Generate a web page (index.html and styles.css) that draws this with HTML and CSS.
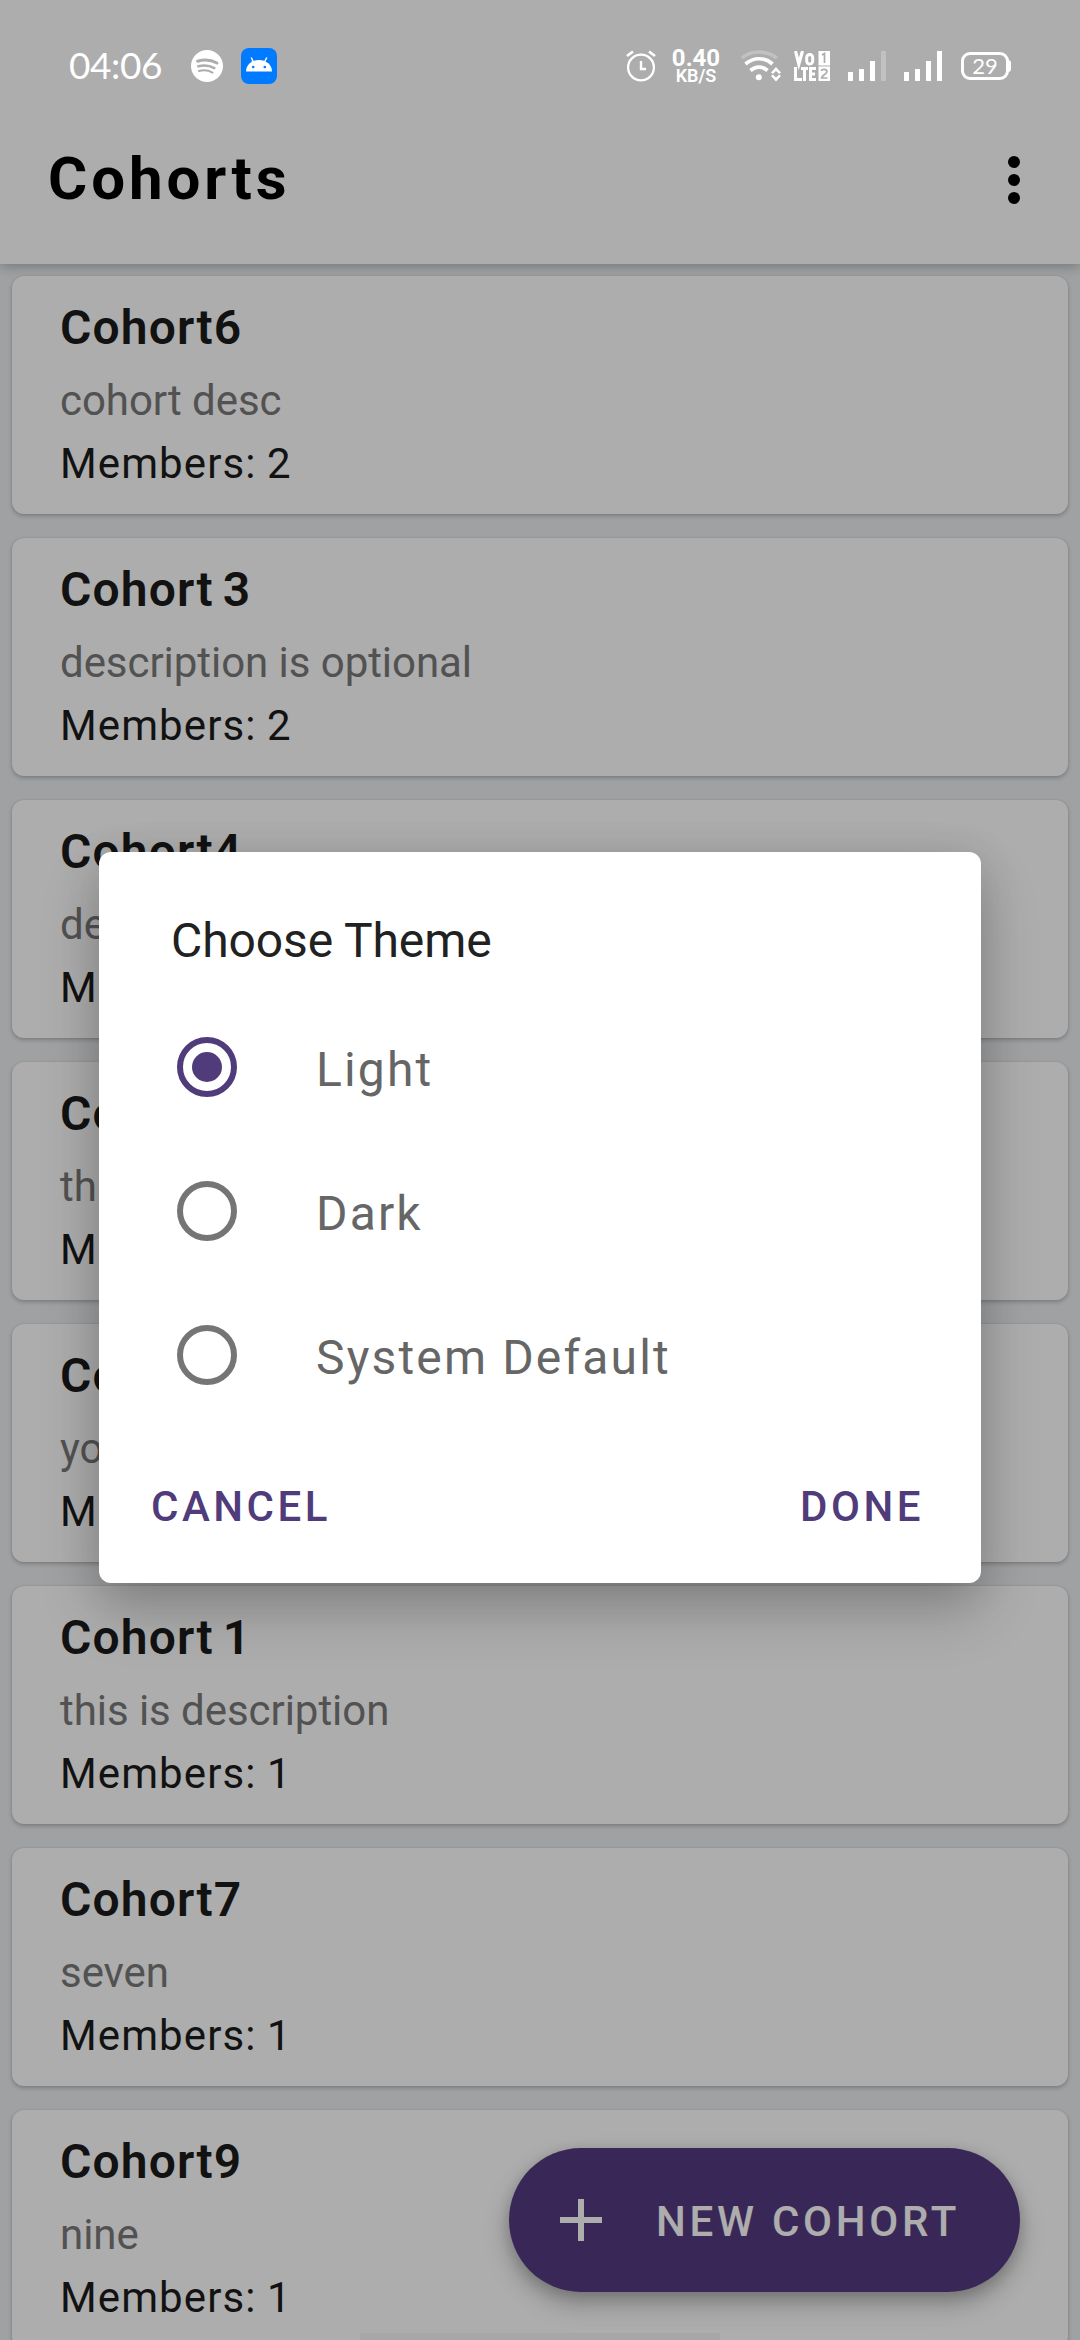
FILE: index.html
```html
<!DOCTYPE html>
<html lang="en">
<head>
<meta charset="utf-8">
<title>Cohorts</title>
<link rel="stylesheet" href="styles.css">
</head>
<body>
<div class="screen">
  <header class="app-bar">
    <h1 class="app-title">Cohorts</h1>
    <svg class="more" width="12" height="48" viewBox="0 0 12 48"><circle cx="6" cy="6" r="6"/><circle cx="6" cy="24" r="6"/><circle cx="6" cy="42" r="6"/></svg>
  </header>
  <main class="list">
    <article class="card"><h2 class="name">Cohort6</h2><p class="desc">cohort desc</p><p class="members">Members: 2</p></article>
    <article class="card"><h2 class="name">Cohort 3</h2><p class="desc">description is optional</p><p class="members">Members: 2</p></article>
    <article class="card"><h2 class="name">Cohort4</h2><p class="desc">desc</p><p class="members">Members: 1</p></article>
    <article class="card"><h2 class="name">Cohort5</h2><p class="desc">this</p><p class="members">Members: 1</p></article>
    <article class="card"><h2 class="name">Cohort 2</h2><p class="desc">you</p><p class="members">Members: 1</p></article>
    <article class="card"><h2 class="name">Cohort 1</h2><p class="desc">this is description</p><p class="members">Members: 1</p></article>
    <article class="card"><h2 class="name">Cohort7</h2><p class="desc">seven</p><p class="members">Members: 1</p></article>
    <article class="card"><h2 class="name">Cohort9</h2><p class="desc">nine</p><p class="members">Members: 1</p></article>
  </main>
  <button class="fab">
    <svg width="42" height="42" viewBox="0 0 42 42"><path d="M18 0h6v18h18v6H24v18h-6V24H0v-6h18z" fill="#fff"/></svg>
    <span class="fab-label">NEW COHORT</span>
  </button>
  <div class="gesture"></div>

  <div class="scrim">
    <section class="dialog">
      <h2 class="dialog-title">Choose Theme</h2>
      <div class="options">
        <label class="option"><span class="radio checked"></span><span class="option-label">Light</span></label>
        <label class="option"><span class="radio"></span><span class="option-label">Dark</span></label>
        <label class="option"><span class="radio"></span><span class="option-label">System Default</span></label>
      </div>
      <div class="actions"><button class="action">CANCEL</button><button class="action">DONE</button></div>
    </section>
  </div>

  <div class="status-bar">
    <div class="status-left">
      <span class="clock">04:06</span>
      <svg class="music" width="32" height="32" viewBox="0 0 32 32"><circle cx="16" cy="16" r="16" fill="#fff"/><g fill="none" stroke="#adadad" stroke-linecap="round"><path d="M6.5 11.2c6-1.700 14-1.200 19.500 1.800" stroke-width="3"/><path d="M7.300 16.300c5.500-1.500 11.500-.8 16 1.800" stroke-width="2.500"/><path d="M8 21c4.500-1.200 9.500-.7 13.500 1.600" stroke-width="2"/></g></svg>
      <svg class="robot" width="36" height="36" viewBox="0 0 36 36"><rect width="36" height="36" rx="8" fill="#007bff"/><path d="M5 23.500a13 11.500 0 0 1 26 0z" fill="#fff"/><path d="M13 15l-2.800-5.500M23 15l2.800-5.500" stroke="#fff" stroke-width="1.500"/><circle cx="12.200" cy="19" r="1.300" fill="#007bff"/><circle cx="23.800" cy="19" r="1.300" fill="#007bff"/></svg>
    </div>
    <div class="status-right">
      <svg class="alarm" width="30" height="32" viewBox="0 0 30 32"><g fill="none" stroke="#fff"><circle cx="15" cy="17.500" r="12.900" stroke-width="2.300"/><path d="M15 11v8h5" stroke-width="2.400"/><path d="M1 6l6-4.500M29 6l-6-4.500" stroke-width="2.800"/></g></svg>
      <div class="speed"><span class="rate">0.40</span><span class="unit">KB/S</span></div>
      <svg class="wifi" width="40" height="32" viewBox="0 0 40 32"><g fill="none" stroke="#fff"><path d="M.8 8c9-8 25-8 35 0" stroke-width="3.500" opacity=".25"/><path d="M4.500 14c8-7 19-7 27 0" stroke-width="3.700"/><path d="M9.500 20.500c5-4.500 12-4.500 17 0" stroke-width="3.700"/></g><circle cx="17.800" cy="27.300" r="3" fill="#fff"/><path d="M30 22.500l5-5.500 5 5.500-1.800 1.500-3.200-3-3.200 3zM30 26l5 5.500 5-5.500-1.800-1.500-3.200 3-3.200-3z" fill="#fff"/></svg>
      <svg class="volte" width="36" height="30" viewBox="0 0 36 30"><g fill="none" stroke="#fff" stroke-width="3"><path d="M1.500 0l3.300 13L8.500 0" stroke-width="3.200"/><rect x="12.700" y="3.500" width="6" height="9.500" rx="3"/><path d="M1.500 16v12.500H8M7 17.500h7M10.500 17v13M22 17.500h-5.500v11H22M16.500 23H21"/></g><path d="M24.500 0H36v14.500H24.500zM24.500 15.500H36V30H24.500z" fill="#fff"/><g fill="none" stroke="#adadad" stroke-width="1.700"><path d="M28 4l2.500-1.500V12"/><path d="M27.300 20c.5-2.200 5.700-2.200 5.700.8 0 2-5.200 3.600-5.500 6.200h6"/></g></svg>
      <svg class="bars" width="38" height="30" viewBox="0 0 38 30"><path d="M0 21h5v9H0zM11 18h5v12h-5zM22 10h5v20h-5z" fill="#fff"/><path d="M33 0h5v30h-5z" fill="#fff" opacity=".25"/></svg>
      <svg class="bars" width="38" height="30" viewBox="0 0 38 30"><path d="M0 21h5v9H0zM11 18h5v12h-5zM22 10h5v20h-5zM33 0h5v30h-5z" fill="#fff"/></svg>
      <span class="battery">29</span>
    </div>
  </div>
</div>
</body>
</html>
```
FILE: styles.css
```css
* { box-sizing: border-box; margin: 0; padding: 0; }
body { width: 1080px; height: 2340px; overflow: hidden; font-family: Roboto, "Liberation Sans", sans-serif; }
button { border: 0; background: none; font: inherit; }
svg { display: block; flex: none; }

.screen { position: relative; display: flex; flex-direction: column; width: 1080px; height: 2340px; overflow: hidden; background: #eaedf0; }

.app-bar { flex: none; height: 264px; padding: 96px 60px 0 48px; display: flex; justify-content: space-between; align-items: flex-start; background: #fff; box-shadow: 0 2px 12px rgba(0,0,0,.28); }
.app-title { margin-top: 44px; line-height: 78px; font-size: 60px; font-weight: 700; letter-spacing: 3.900px; color: #000; }
.more { margin: 60px 0 0; }

.list { display: flex; flex-direction: column; gap: 24px; padding: 12px 12px 0; }
.card { flex: none; height: 238px; padding: 23px 48px 0; border-radius: 12px; background: #fff; box-shadow: 0 2px 4px rgba(0,0,0,.22), 0 0 2px rgba(0,0,0,.1); }
.name { line-height: 58px; font-size: 48px; font-weight: 600; letter-spacing: 1.100px; word-spacing: -4px; color: #1b1b1b; }
.desc { margin-top: 19px; line-height: 50px; font-size: 42px; letter-spacing: -.05px; color: #797979; }
.members { margin-top: 13px; line-height: 50px; font-size: 42px; letter-spacing: 1.100px; word-spacing: -1px; color: #1b1b1b; }

.fab { position: absolute; right: 60px; bottom: 48px; width: 511px; height: 144px; padding-left: 51px; border-radius: 72px; display: flex; align-items: center; gap: 54px; background: #553c80; box-shadow: 0 12px 24px rgba(0,0,0,.26), 0 3px 14px rgba(0,0,0,.14); }
.fab-label { padding-top: 2px; font-size: 42px; font-weight: 500; letter-spacing: 3.750px; color: #fff; white-space: nowrap; }
.gesture { position: absolute; left: 360px; bottom: 0; width: 360px; height: 7px; background: rgba(0,0,0,.03); }

.scrim { position: absolute; inset: 0; display: flex; justify-content: center; align-items: flex-start; padding-top: 852px; background: rgba(0,0,0,.32); }
.dialog { width: 882px; height: 731px; padding-top: 61px; border-radius: 12px; background: #fff; box-shadow: 0 28px 60px rgba(0,0,0,.2), 0 6px 40px rgba(0,0,0,.12); }
.dialog-title { padding-left: 72px; line-height: 56px; font-size: 48px; font-weight: 400; letter-spacing: -.1px; color: #212121; }
.options { padding: 28px 0 0 78px; }
.option { height: 144px; display: flex; align-items: center; gap: 79px; }
.radio { width: 60px; height: 60px; margin-bottom: 4px; border: 6px solid #757575; border-radius: 50%; display: grid; place-items: center; }
.radio.checked { border-color: #503b7b; }
.radio.checked::after { content: ""; width: 30px; height: 30px; border-radius: 50%; background: #503b7b; }
.option-label { font-size: 48px; letter-spacing: 2.150px; color: #666; }
.actions { display: flex; justify-content: space-between; padding: 53px 57px 0 52px; }
.action { line-height: 50px; font-size: 42px; font-weight: 500; letter-spacing: 3.500px; color: #503b7b; }

.status-bar { position: absolute; left: 0; top: 0; width: 1080px; height: 132px; padding: 0 71px 0 69px; display: flex; justify-content: space-between; align-items: center; color: #fff; }
.status-left, .status-right { display: flex; align-items: center; }
.clock { width: 122px; padding-bottom: 3px; font-family: Lato, sans-serif; font-size: 37px; letter-spacing: -.4px; white-space: nowrap; }
.robot { margin-left: 18px; }
.speed { width: 48px; margin-left: 16px; display: flex; flex-direction: column; align-items: center; font-weight: 700; }
.rate { line-height: 20px; font-size: 24px; }
.unit { line-height: 16px; font-size: 18px; font-weight: 600; }
.wifi { margin-left: 21px; }
.volte { margin-left: 13px; }
.bars { margin-left: 18px; }
.battery { position: relative; width: 48px; height: 28px; margin-left: 19px; border: 3px solid #fff; border-radius: 9px; text-align: center; font: 22px/22px Lato, sans-serif; }
.battery::after { content: ""; position: absolute; right: -5px; top: 5px; width: 3px; height: 12px; border-radius: 0 3px 3px 0; background: #fff; }
```
